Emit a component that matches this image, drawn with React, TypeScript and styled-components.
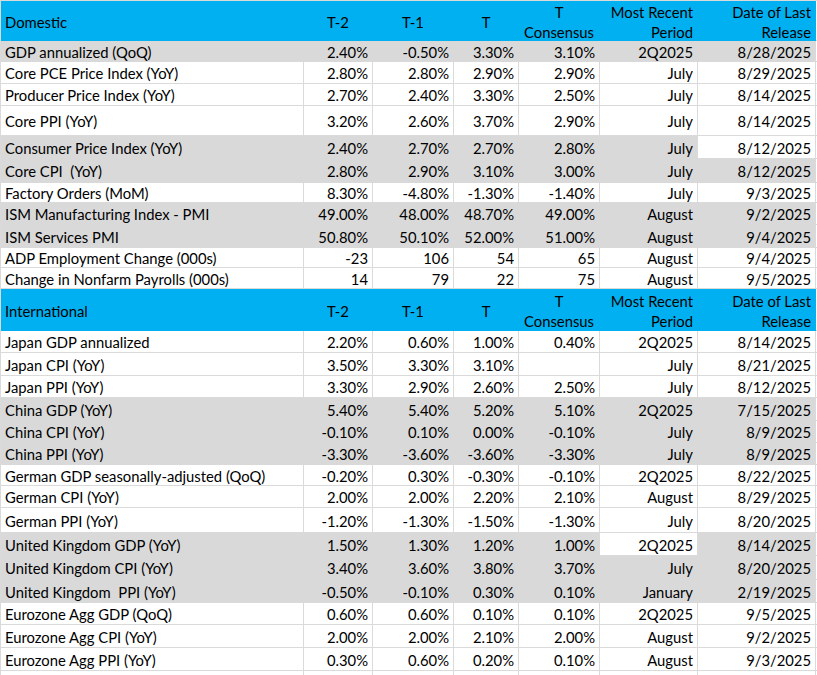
import React from 'react';
import styled, { createGlobalStyle } from 'styled-components';

const GRID = '#DADADA';
const BLUE = '#00B0F0';
const GRAY = '#D9D9D9';

type Fill = 'blue' | 'gray' | 'none';
type Align = 'left' | 'right' | 'center';

const fillColor = (f: Fill) => (f === 'blue' ? BLUE : f === 'gray' ? GRAY : '#FFFFFF');
const lineColor = (f: Fill) => (f === 'none' ? GRID : fillColor(f));

const GlobalStyle = createGlobalStyle`
  html, body { margin: 0; padding: 0; background: #fff; }
  body {
    font-family: Lato, "Liberation Sans", sans-serif;
    color: #000;
    overflow: hidden;
  }
`;

const Sheet = styled.div`
  width: 817px;
  height: 675px;
  overflow: hidden;
  box-sizing: border-box;
  border-top: 1px solid ${GRID};
  border-left: 1px solid ${GRID};
`;

const Row = styled.div<{ $h: number }>`
  display: grid;
  grid-template-columns: 303px 69px 81px 65px 81px 98px 118px 1fr;
  height: ${(p) => p.$h}px;
`;

const Cell = styled.div<{ $fill: Fill; $align: Align; $head?: boolean }>`
  box-sizing: border-box;
  display: flex;
  align-items: center;
  justify-content: ${(p) =>
    p.$align === 'left' ? 'flex-start' : p.$align === 'right' ? 'flex-end' : 'center'};
  padding: ${(p) => (p.$head ? '3px 4px 0 4px' : '2px 4px 0 4px')};
  font-size: 14.8px;
  line-height: 17px;
  white-space: pre;
  overflow: hidden;
  background: ${(p) => fillColor(p.$fill)};
  border-right: 1px solid ${(p) => lineColor(p.$fill)};
  border-bottom: 1px solid ${(p) => lineColor(p.$fill)};
`;

const Spill = styled.div`
  box-sizing: border-box;
  border-bottom: 1px solid ${GRID};
  background: #fff;
`;

const HeadText = styled.div<{ $align: Align }>`
  text-align: ${(p) => p.$align};
  line-height: 20px;
  white-space: pre;
`;

type DataRow = {
  h: number;
  label: string;
  vals: string[];
  fill: Fill;
  white?: number[];
};

const domestic: DataRow[] = [
  { h: 21, label: 'GDP annualized (QoQ)', vals: ['2.40%', '-0.50%', '3.30%', '3.10%', '2Q2025', '8/28/2025'], fill: 'gray' },
  { h: 22, label: 'Core PCE Price Index (YoY)', vals: ['2.80%', '2.80%', '2.90%', '2.90%', 'July', '8/29/2025'], fill: 'none' },
  { h: 22, label: 'Producer Price Index (YoY)', vals: ['2.70%', '2.40%', '3.30%', '2.50%', 'July', '8/14/2025'], fill: 'none' },
  { h: 30, label: 'Core PPI (YoY)', vals: ['3.20%', '2.60%', '3.70%', '2.90%', 'July', '8/14/2025'], fill: 'none' },
  { h: 23, label: 'Consumer Price Index (YoY)', vals: ['2.40%', '2.70%', '2.70%', '2.80%', 'July', '8/12/2025'], fill: 'gray', white: [5] },
  { h: 24, label: 'Core CPI  (YoY)', vals: ['2.80%', '2.90%', '3.10%', '3.00%', 'July', '8/12/2025'], fill: 'gray' },
  { h: 20, label: 'Factory Orders (MoM)', vals: ['8.30%', '-4.80%', '-1.30%', '-1.40%', 'July', '9/3/2025'], fill: 'none' },
  { h: 22, label: 'ISM Manufacturing Index - PMI', vals: ['49.00%', '48.00%', '48.70%', '49.00%', 'August', '9/2/2025'], fill: 'gray' },
  { h: 23, label: 'ISM Services PMI', vals: ['50.80%', '50.10%', '52.00%', '51.00%', 'August', '9/4/2025'], fill: 'gray' },
  { h: 20, label: 'ADP Employment Change (000s)', vals: ['-23', '106', '54', '65', 'August', '9/4/2025'], fill: 'none' },
  { h: 21, label: 'Change in Nonfarm Payrolls (000s)', vals: ['14', '79', '22', '75', 'August', '9/5/2025'], fill: 'none' },
];

const international: DataRow[] = [
  { h: 22, label: 'Japan GDP annualized', vals: ['2.20%', '0.60%', '1.00%', '0.40%', '2Q2025', '8/14/2025'], fill: 'none' },
  { h: 23, label: 'Japan CPI (YoY)', vals: ['3.50%', '3.30%', '3.10%', '', 'July', '8/21/2025'], fill: 'none' },
  { h: 22, label: 'Japan PPI (YoY)', vals: ['3.30%', '2.90%', '2.60%', '2.50%', 'July', '8/12/2025'], fill: 'none' },
  { h: 23, label: 'China GDP (YoY)', vals: ['5.40%', '5.40%', '5.20%', '5.10%', '2Q2025', '7/15/2025'], fill: 'gray' },
  { h: 22, label: 'China CPI (YoY)', vals: ['-0.10%', '0.10%', '0.00%', '-0.10%', 'July', '8/9/2025'], fill: 'gray' },
  { h: 22, label: 'China PPI (YoY)', vals: ['-3.30%', '-3.60%', '-3.60%', '-3.30%', 'July', '8/9/2025'], fill: 'gray' },
  { h: 21, label: 'German GDP seasonally-adjusted (QoQ)', vals: ['-0.20%', '0.30%', '-0.30%', '-0.10%', '2Q2025', '8/22/2025'], fill: 'none' },
  { h: 22, label: 'German CPI (YoY)', vals: ['2.00%', '2.00%', '2.20%', '2.10%', 'August', '8/29/2025'], fill: 'none' },
  { h: 25, label: 'German PPI (YoY)', vals: ['-1.20%', '-1.30%', '-1.50%', '-1.30%', 'July', '8/20/2025'], fill: 'none' },
  { h: 23, label: 'United Kingdom GDP (YoY)', vals: ['1.50%', '1.30%', '1.20%', '1.00%', '2Q2025', '8/14/2025'], fill: 'gray', white: [4] },
  { h: 24, label: 'United Kingdom CPI (YoY)', vals: ['3.40%', '3.60%', '3.80%', '3.70%', 'July', '8/20/2025'], fill: 'gray' },
  { h: 23, label: 'United Kingdom  PPI (YoY)', vals: ['-0.50%', '-0.10%', '0.30%', '0.10%', 'January', '2/19/2025'], fill: 'gray' },
  { h: 22, label: 'Eurozone Agg GDP (QoQ)', vals: ['0.60%', '0.60%', '0.10%', '0.10%', '2Q2025', '9/5/2025'], fill: 'none' },
  { h: 23, label: 'Eurozone Agg CPI (YoY)', vals: ['2.00%', '2.00%', '2.10%', '2.00%', 'August', '9/2/2025'], fill: 'none' },
  { h: 23, label: 'Eurozone Agg PPI (YoY)', vals: ['0.30%', '0.60%', '0.20%', '0.10%', 'August', '9/3/2025'], fill: 'none' },
];

const headCols: { text: string; align: Align }[] = [
  { text: 'T-2', align: 'center' },
  { text: 'T-1', align: 'center' },
  { text: 'T', align: 'center' },
  { text: 'T\nConsensus', align: 'center' },
  { text: 'Most Recent\nPeriod', align: 'right' },
  { text: 'Date of Last\nRelease', align: 'right' },
];

const HeaderRow: React.FC<{ title: string; h: number }> = ({ title, h }) => (
  <Row $h={h}>
    <Cell $fill="blue" $align="left" $head>
      <HeadText $align="left">{title}</HeadText>
    </Cell>
    {headCols.map((c) => (
      <Cell key={c.text} $fill="blue" $align={c.align} $head>
        <HeadText $align={c.align}>{c.text}</HeadText>
      </Cell>
    ))}
    <Spill />
  </Row>
);

const BodyRow: React.FC<{ row: DataRow }> = ({ row }) => (
  <Row $h={row.h}>
    <Cell $fill={row.fill} $align="left">{row.label}</Cell>
    {row.vals.map((v, i) => (
      <Cell key={i} $fill={row.white && row.white.includes(i) ? 'none' : row.fill} $align="right">
        {v}
      </Cell>
    ))}
    <Spill />
  </Row>
);

export default function App() {
  return (
    <>
      <GlobalStyle />
      <Sheet>
        <HeaderRow title="Domestic" h={40} />
        {domestic.map((r) => (
          <BodyRow key={r.label} row={r} />
        ))}
        <HeaderRow title="International" h={42} />
        {international.map((r) => (
          <BodyRow key={r.label} row={r} />
        ))}
        <Row $h={22}>
          {[0, 1, 2, 3, 4, 5, 6].map((i) => (
            <Cell key={i} $fill="none" $align="left" />
          ))}
          <Spill />
        </Row>
      </Sheet>
    </>
  );
}
